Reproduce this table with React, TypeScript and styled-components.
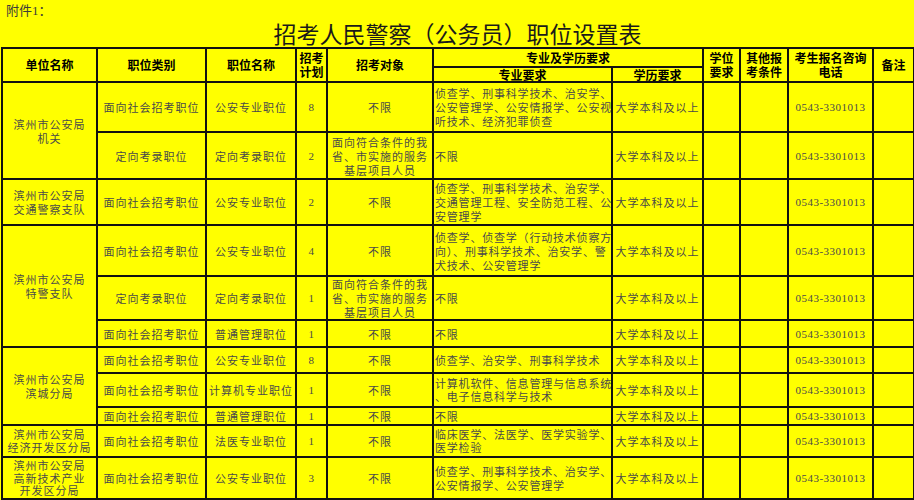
import styled, { createGlobalStyle } from 'styled-components';

const GlobalStyle = createGlobalStyle`
  html, body {
    margin: 0;
    padding: 0;
    background: #ffff00;
  }
  body {
    font-family: "Noto Sans CJK SC", "Liberation Sans", sans-serif;
  }
`;

const PHONE = '0543-3301013';
const EDU = '大学本科及以上';
const SOCIAL = '面向社会招考职位';
const DIRECTED = '定向考录职位';
const TARGET = ['面向符合条件的我', '省、市实施的服务', '基层项目人员'];

type Row = {
  unit?: string[];
  span?: number;
  type: string;
  name: string;
  plan: string;
  target: string[];
  major: string[];
  height: number;
  unitLh?: number;
  majorLh?: number;
};

const rows: Row[] = [
  {
    unit: ['滨州市公安局', '机关'],
    span: 2,
    type: SOCIAL,
    name: '公安专业职位',
    plan: '8',
    target: ['不限'],
    major: ['侦查学、刑事科学技术、治安学、', '公安管理学、公安情报学、公安视', '听技术、经济犯罪侦查'],
    height: 50,
  },
  { type: DIRECTED, name: DIRECTED, plan: '2', target: TARGET, major: ['不限'], height: 47 },
  {
    unit: ['滨州市公安局', '交通警察支队'],
    span: 1,
    type: SOCIAL,
    name: '公安专业职位',
    plan: '2',
    target: ['不限'],
    major: ['侦查学、刑事科学技术、治安学、', '交通管理工程、安全防范工程、公', '安管理学'],
    height: 46,
  },
  {
    unit: ['滨州市公安局', '特警支队'],
    span: 3,
    type: SOCIAL,
    name: '公安专业职位',
    plan: '4',
    target: ['不限'],
    major: ['侦查学、侦查学（行动技术侦察方', '向）、刑事科学技术、治安学、警', '犬技术、公安管理学'],
    height: 51,
  },
  { type: DIRECTED, name: DIRECTED, plan: '1', target: TARGET, major: ['不限'], height: 43 },
  { type: SOCIAL, name: '普通管理职位', plan: '1', target: ['不限'], major: ['不限'], height: 27 },
  {
    unit: ['滨州市公安局', '滨城分局'],
    span: 3,
    type: SOCIAL,
    name: '公安专业职位',
    plan: '8',
    target: ['不限'],
    major: ['侦查学、治安学、刑事科学技术'],
    height: 26,
  },
  {
    type: SOCIAL,
    name: '计算机专业职位',
    plan: '1',
    target: ['不限'],
    major: ['计算机软件、信息管理与信息系统', '、电子信息科学与技术'],
    height: 34,
    majorLh: 13,
  },
  { type: SOCIAL, name: '普通管理职位', plan: '1', target: ['不限'], major: ['不限'], height: 18 },
  {
    unit: ['滨州市公安局', '经济开发区分局'],
    span: 1,
    type: SOCIAL,
    name: '法医专业职位',
    plan: '1',
    target: ['不限'],
    major: ['临床医学、法医学、医学实验学、', '医学检验'],
    height: 32,
    unitLh: 13,
    majorLh: 13,
  },
  {
    unit: ['滨州市公安局', '高新技术产业', '开发区分局'],
    span: 1,
    type: SOCIAL,
    name: '公安专业职位',
    plan: '3',
    target: ['不限'],
    major: ['侦查学、刑事科学技术、治安学、', '公安情报学、公安管理学'],
    height: 42,
    unitLh: 12.5,
  },
];

const widths = [95, 109, 90, 31, 106, 179, 91, 37, 48, 85, 41];

function Lines({ lines }: { lines: string[] }) {
  return (
    <>
      {lines.map((l, i) => (
        <span key={i}>
          {i > 0 && <br />}
          {l}
        </span>
      ))}
    </>
  );
}

export default function App() {
  return (
    <Page>
      <GlobalStyle />
      <Attachment>附件1：</Attachment>
      <Title>招考人民警察（公务员）职位设置表</Title>
      <Table>
        <colgroup>
          {widths.map((w, i) => (
            <col key={i} style={{ width: w }} />
          ))}
        </colgroup>
        <thead>
          <tr style={{ height: 19 }}>
            <HeadCell rowSpan={2}>单位名称</HeadCell>
            <HeadCell rowSpan={2}>职位类别</HeadCell>
            <HeadCell rowSpan={2}>职位名称</HeadCell>
            <HeadCell rowSpan={2} $lh={14}>
              招考
              <br />
              计划
            </HeadCell>
            <HeadCell rowSpan={2}>招考对象</HeadCell>
            <HeadCell colSpan={2} $lh={15}>专业及学历要求</HeadCell>
            <HeadCell rowSpan={2} $lh={14}>
              学位
              <br />
              要求
            </HeadCell>
            <HeadCell rowSpan={2} $lh={14}>
              其他报
              <br />
              考条件
            </HeadCell>
            <HeadCell rowSpan={2} $lh={14}>
              考生报名咨询
              <br />
              电话
            </HeadCell>
            <HeadCell rowSpan={2}>备注</HeadCell>
          </tr>
          <tr style={{ height: 15 }}>
            <HeadCell $lh={12}>专业要求</HeadCell>
            <HeadCell $lh={12}>学历要求</HeadCell>
          </tr>
        </thead>
        <tbody>
          {rows.map((r, i) => (
            <tr key={i} style={{ height: r.height }}>
              {r.unit && (
                <Cell rowSpan={r.span} $lh={r.unitLh}>
                  <Lines lines={r.unit} />
                </Cell>
              )}
              <Cell>{r.type}</Cell>
              <Cell>{r.name}</Cell>
              <NumCell>{r.plan}</NumCell>
              <Cell>
                <Lines lines={r.target} />
              </Cell>
              <MajorCell $lh={r.majorLh}>
                <Lines lines={r.major} />
              </MajorCell>
              <Cell>{EDU}</Cell>
              <Cell />
              <Cell />
              <NumCell>{PHONE}</NumCell>
              <Cell />
            </tr>
          ))}
        </tbody>
      </Table>
    </Page>
  );
}

const Page = styled.div`
  width: 914px;
  height: 500px;
  overflow: hidden;
  background: #ffff00;
  padding: 0 0 0 1px;
  box-sizing: border-box;
`;

const Attachment = styled.div`
  height: 20px;
  padding: 3px 0 0 5px;
  box-sizing: border-box;
  font-family: "Liberation Serif", "Noto Sans CJK SC", serif;
  font-size: 13px;
  line-height: 15px;
  color: #3a3a3a;
`;

const Title = styled.h1`
  margin: 0;
  height: 27px;
  text-align: center;
  font-size: 23px;
  line-height: 27px;
  font-weight: 400;
  color: #1a1a1a;
  font-family: "Noto Sans CJK SC", sans-serif;
`;

const Table = styled.table`
  width: 912px;
  table-layout: fixed;
  border-collapse: collapse;
  border: 2px solid #111;
`;

const HeadCell = styled.th<{ $lh?: number }>`
  border: 2px solid #111;
  padding: 0;
  font-size: 12px;
  line-height: ${(p) => p.$lh ?? 16}px;
  font-weight: 700;
  color: #000;
  text-align: center;
  vertical-align: middle;
  white-space: nowrap;
  overflow: hidden;
`;

const Cell = styled.td<{ $lh?: number }>`
  border: 2px solid #111;
  padding: 0;
  font-size: 11px;
  letter-spacing: 1px;
  line-height: ${(p) => p.$lh ?? 14}px;
  color: #4a4a4a;
  text-align: center;
  vertical-align: middle;
  white-space: nowrap;
  overflow: hidden;
`;

const MajorCell = styled(Cell)`
  text-align: left;
  padding-left: 1px;
  letter-spacing: 0.8px;
`;

const NumCell = styled(Cell)`
  font-family: "Liberation Serif", serif;
  letter-spacing: 0.5px;
`;
